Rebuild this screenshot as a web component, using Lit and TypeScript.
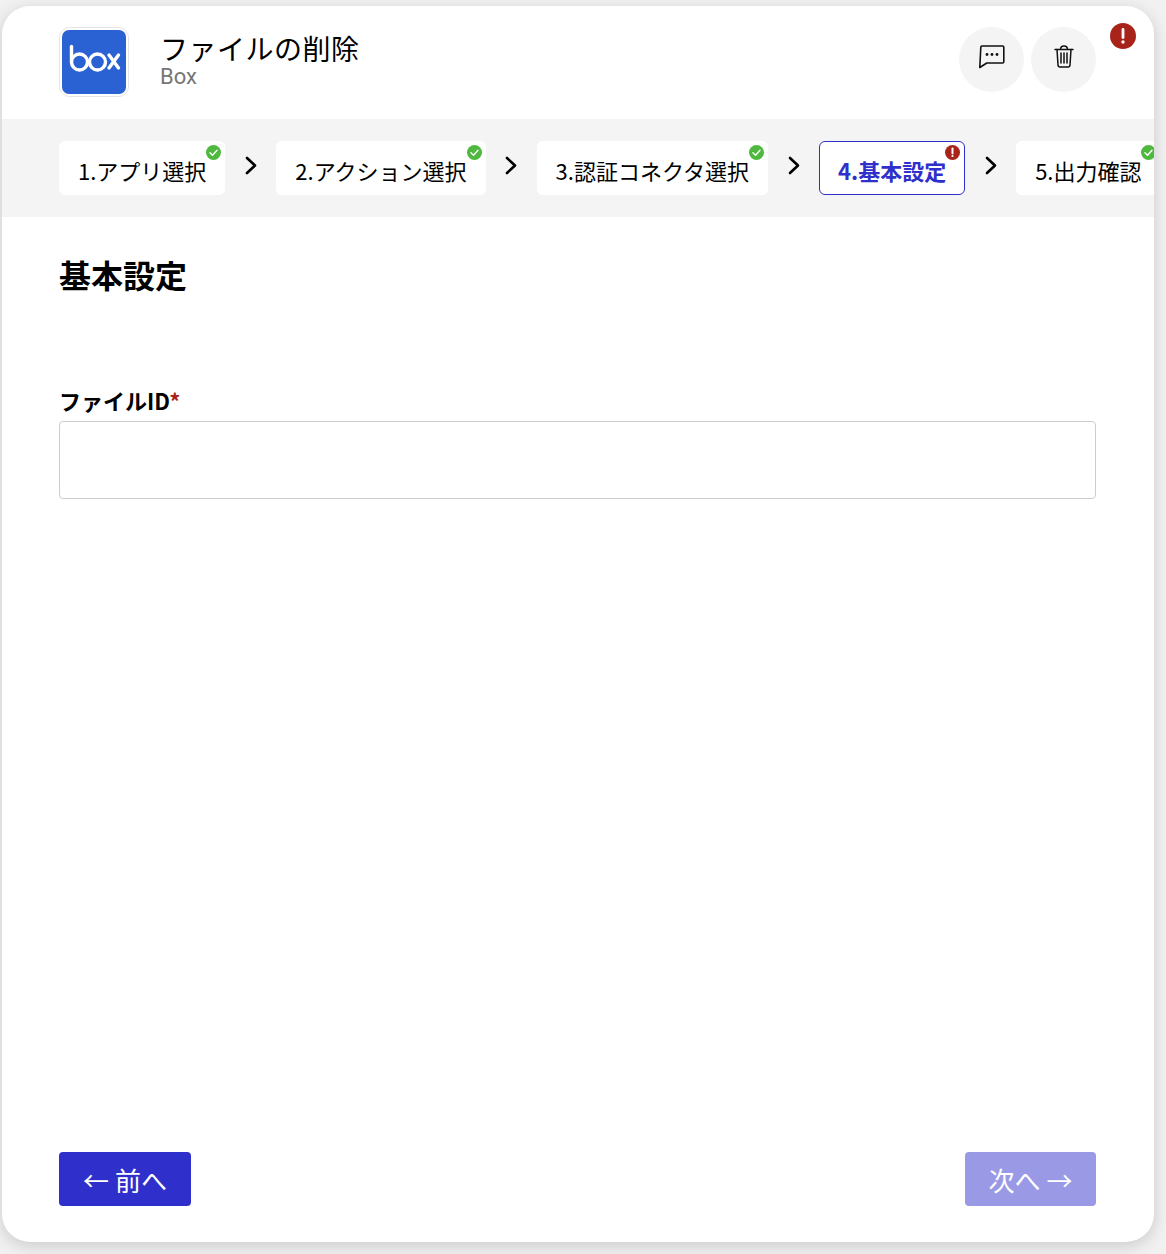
import { LitElement, html, css, svg } from "lit";
import { customElement } from "lit/decorators.js";

const check = html`<svg class="badge" viewBox="0 0 15 15"><circle cx="7.5" cy="7.5" r="7.5" fill="#4fb83f"/><path d="M4 7.8l2.5 2.4L11 5.2" fill="none" stroke="#fff" stroke-width="1.4" stroke-linecap="round" stroke-linejoin="round"/></svg>`;
const alert = html`<svg class="badge" viewBox="0 0 15 15"><circle cx="7.5" cy="7.5" r="7.5" fill="#a8231a"/><path d="M7.5 3.6v4.8" stroke="#fff" stroke-width="2" stroke-linecap="round"/><circle cx="7.5" cy="11" r="1.1" fill="#fff"/></svg>`;
const chevron = svg`<path d="M2 2l8 7.5L2 17" fill="none" stroke="#000" stroke-width="2.6" stroke-linecap="round" stroke-linejoin="round"/>`;

const steps = [
  { label: "1.アプリ選択", state: "ok" },
  { label: "2.アクション選択", state: "ok" },
  { label: "3.認証コネクタ選択", state: "ok" },
  { label: "4.基本設定", state: "error" },
  { label: "5.出力確認", state: "ok" },
];

@customElement("app-root")
export class AppRoot extends LitElement {
  static styles = css`
    :host {
      display: block;
      box-sizing: border-box;
      width: 1166px;
      height: 1254px;
      padding: 6px 12px 12px 2px;
      background: #f1f1f1;
      overflow: hidden;
      font-family: "Noto Sans CJK JP", "Noto Sans", sans-serif;
      color: #000;
    }
    .card {
      position: relative;
      height: 1236px;
      background: #fff;
      border-radius: 28px;
      box-shadow: 0 4px 16px rgba(0, 0, 0, 0.16);
      display: flex;
      flex-direction: column;
      overflow: hidden;
    }
    .head {
      height: 113px;
      box-sizing: border-box;
      padding: 21px 58px 0 57px;
      display: flex;
      align-items: flex-start;
    }
    .logo {
      width: 70px;
      height: 70px;
      flex: none;
      display: block;
    }
    .titles {
      margin-left: 31px;
      margin-top: -1px;
      flex: 1;
    }
    .title {
      font-size: 28px;
      line-height: 44px;
      letter-spacing: 0.5px;
    }
    .sub {
      font-family: Roboto, sans-serif;
      font-size: 22px;
      line-height: 22px;
      margin-top: -4px;
      color: #767676;
    }
    .actions {
      display: flex;
      gap: 7px;
    }
    .round {
      width: 65px;
      height: 65px;
      border-radius: 50%;
      background: #f4f4f4;
      display: flex;
      align-items: center;
      justify-content: center;
    }
    .round svg {
      display: block;
      margin-top: -6px;
    }
    .alert-top {
      position: absolute;
      width: 26px;
      height: 26px;
      top: 17px;
      left: 1108px;
    }
    .steps {
      height: 98px;
      box-sizing: border-box;
      background: #f4f4f4;
      padding: 22px 0 0 57px;
      display: flex;
      align-items: flex-start;
    }
    .step {
      position: relative;
      height: 54px;
      box-sizing: border-box;
      padding: 0 19px;
      background: #fff;
      border-radius: 6px;
      font-size: 22px;
      line-height: 58px;
      white-space: nowrap;
      flex: none;
    }
    .step.active {
      border: 1px solid #2f2fcb;
      padding: 0 18px;
      line-height: 56px;
      color: #2f2fcb;
      font-weight: 700;
    }
    .step .badge {
      position: absolute;
      top: 4px;
      right: 4px;
      width: 15px;
      height: 15px;
    }
    .step.active .badge {
      top: 3px;
      right: 4px;
    }
    .chev {
      width: 51px;
      height: 19px;
      flex: none;
      margin-top: 15px;
      display: flex;
      justify-content: center;
    }
    .main {
      flex: 1;
      padding: 0 58px 0 57px;
      display: flex;
      flex-direction: column;
    }
    h1 {
      margin: 34px 0 0;
      font-size: 32px;
      line-height: 46px;
      font-weight: 700;
    }
    label {
      display: block;
      margin-top: 87px;
      font-size: 22px;
      line-height: 32px;
      font-weight: 700;
    }
    label span {
      color: #a8231a;
    }
    .input {
      margin-top: 5px;
      height: 78px;
      box-sizing: border-box;
      border: 1px solid #cccccc;
      border-radius: 4px;
    }
    .foot {
      margin-top: auto;
      padding-bottom: 36px;
      display: flex;
      justify-content: space-between;
    }
    .btn {
      height: 54px;
      box-sizing: border-box;
      border-radius: 4px;
      background: #2f2fcb;
      color: #fff;
      font-size: 26px;
      line-height: 56px;
      text-align: center;
    }
    .prev {
      width: 132px;
    }
    .next {
      width: 131px;
      background: #9999e5;
    }
  `;

  render() {
    return html`
      <div class="card">
        <div class="head">
          <svg class="logo" viewBox="0 0 70 70">
            <rect x="0.5" y="0.5" width="69" height="69" rx="10" fill="#fff" stroke="#e4e4e4"/>
            <rect x="3" y="3" width="64" height="64" rx="7" fill="#2a62d4"/>
            <g fill="none" stroke="#fff" stroke-width="3.4" stroke-linecap="round">
              <path d="M12.5 19.5v15.5"/>
              <circle cx="20.5" cy="35" r="8"/>
              <circle cx="38.5" cy="35" r="8"/>
              <path d="M50 28l9.5 13M59.5 28L50 41"/>
            </g>
          </svg>
          <div class="titles">
            <div class="title">ファイルの削除</div>
            <div class="sub">Box</div>
          </div>
          <div class="actions">
            <div class="round">
              <svg width="26" height="24" viewBox="0 0 26 24" fill="none" stroke="#111" stroke-width="1.6" stroke-linejoin="round">
                <path d="M2 2.2c0-.7.5-1.2 1.2-1.2h20.6c.7 0 1.2.5 1.2 1.2v14.6c0 .7-.5 1.2-1.2 1.2H8L1 22.5z" transform="translate(-.2 0)"/>
                <g fill="#111" stroke="none"><circle cx="8" cy="9.5" r="1.4"/><circle cx="13" cy="9.5" r="1.4"/><circle cx="18" cy="9.5" r="1.4"/></g>
              </svg>
            </div>
            <div class="round">
              <svg width="20" height="23" viewBox="0 0 20 23" fill="none" stroke="#111" stroke-width="1.5" stroke-linecap="round" stroke-linejoin="round">
                <path d="M1 4.5h18M6.5 4.5c0-2 1-3.5 3.5-3.5s3.5 1.5 3.5 3.5"/>
                <path d="M3 4.5l1 15.5c.1 1.3 1 2 2 2h8c1 0 1.900-.7 2-2l1-15.500"/>
                <path d="M7 8v10M10 8v10M13 8v10"/>
              </svg>
            </div>
          </div>
        </div>
        <div class="steps">
          ${steps.map(
            (s, i) => html`
              <div class="step ${s.state === "error" ? "active" : ""}">
                ${s.label}${s.state === "error" ? alert : check}
              </div>
              ${i < steps.length - 1
                ? html`<div class="chev"><svg width="12" height="19" viewBox="0 0 12 19">${chevron}</svg></div>`
                : ""}
            `
          )}
        </div>
        <div class="main">
          <h1>基本設定</h1>
          <label>ファイルID<span>*</span></label>
          <div class="input"></div>
          <div class="foot">
            <div class="btn prev">← 前へ</div>
            <div class="btn next">次へ →</div>
          </div>
        </div>
        <svg class="alert-top" viewBox="0 0 26 26"><circle cx="13" cy="13" r="13" fill="#a8231a"/><path d="M13 6.500v8" stroke="#fff" stroke-width="2.800" stroke-linecap="round"/><circle cx="13" cy="19" r="1.700" fill="#fff"/></svg>
      </div>
    `;
  }
}
